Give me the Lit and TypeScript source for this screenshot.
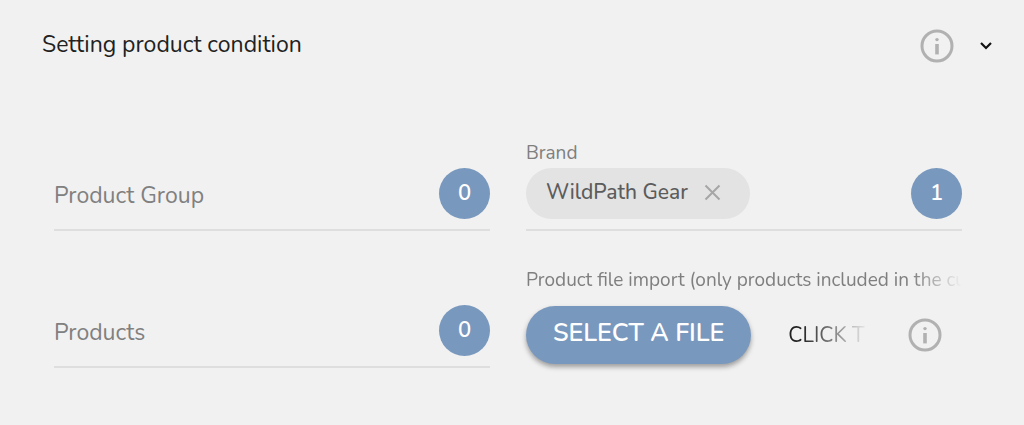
import { LitElement, html, css, svg } from "lit";
import { customElement, property } from "lit/decorators.js";

const infoIcon = html`<svg width="34" height="34" viewBox="0 0 34 34" aria-hidden="true">
  ${svg`<circle cx="17" cy="17" r="15" fill="none" stroke="#b1b1b1" stroke-width="3"/>
  <circle cx="17" cy="10.6" r="1.7" fill="#b1b1b1"/>
  <rect x="15.2" y="15" width="3.6" height="10.4" fill="#b1b1b1"/>`}
</svg>`;

@customElement("count-field")
export class CountField extends LitElement {
  @property() label = "";
  @property() chip = "";
  @property({ type: Number }) count = 0;

  static styles = css`
    :host { display: block; min-width: 0; }
    .caption { display: block; font-size: 19px; line-height: 24px; color: #7f7f7f; margin-bottom: 3px; }
    .row {
      display: flex;
      align-items: center;
      padding-bottom: 10px;
      border-bottom: 2px solid #dedede;
    }
    .label { padding-top: 4px; font-size: 23px; line-height: 32px; color: #808080; white-space: nowrap; }
    input {
      flex: 1;
      min-width: 0;
      height: 32px;
      border: 0;
      padding: 0;
      background: transparent;
      outline: none;
      font: inherit;
      font-size: 23px;
    }
    .chip {
      display: flex;
      align-items: center;
      height: 51px;
      box-sizing: border-box;
      padding: 0 29px 2px 20px;
      border-radius: 26px;
      background: #e3e3e3;
      color: #5c5c5c;
      font-size: 21px;
      font-weight: 500;
      line-height: 28px;
      white-space: nowrap;
    }
    .chip-text { padding-bottom: 2px; }
    .remove { display: flex; margin-left: 16px; border: 0; padding: 0; background: none; cursor: pointer; }
    .badge {
      flex: none;
      display: flex;
      align-items: center;
      justify-content: center;
      width: 51px;
      height: 51px;
      box-sizing: border-box;
      padding-bottom: 2px;
      border-radius: 50%;
      background: #7998be;
      color: #fff;
      font-size: 22px;
      font-weight: 600;
      line-height: 28px;
    }
  `;

  render() {
    return html`
      ${this.chip ? html`<label class="caption" for="value">${this.label}</label>` : ""}
      <div class="row">
        ${this.chip
          ? html`<span class="chip"><span class="chip-text">${this.chip}</span>
              <button class="remove" aria-label="Remove">
                <svg width="17" height="17" viewBox="0 0 17 17" aria-hidden="true">
                  <path d="M1.5 1.5 15.5 15.5M15.5 1.5 1.5 15.5" stroke="#a6a6a6" stroke-width="2" fill="none"/>
                </svg>
              </button></span>`
          : html`<label class="label" for="value">${this.label}</label>`}
        <input id="value" type="text" />
        <span class="badge">${this.count}</span>
      </div>
    `;
  }
}

@customElement("app-root")
export class AppRoot extends LitElement {
  static styles = css`
    :host {
      display: block;
      min-height: 100vh;
      background: #f1f1f1;
      color: #212121;
      font-family: Nunito, Lato, sans-serif;
    }
    .header { display: flex; align-items: center; padding: 29px 31px 0 42px; }
    .title { flex: 1; margin: 0; font-size: 23px; line-height: 32px; font-weight: 400; padding-bottom: 2px; }
    .icon-button { flex: none; display: flex; border: 0; padding: 0; background: none; cursor: pointer; }
    .header-actions { display: flex; align-items: center; gap: 25px; }
    .fields {
      display: grid;
      grid-template-columns: minmax(0, 1fr) minmax(0, 1fr);
      gap: 37px 36px;
      align-items: end;
      padding: 78px 62px 24px 54px;
    }
    .import { min-width: 0; }
    .caption {
      font-size: 19px;
      line-height: 24px;
      color: #7f7f7f;
      white-space: nowrap;
      overflow: hidden;
      mask-image: linear-gradient(to right, #000 calc(100% - 50px), transparent);
    }
    .controls { display: flex; align-items: center; padding: 14px 20px 4px 0; }
    .select {
      flex: none;
      height: 58px;
      padding: 0 27px 4px;
      border: 0;
      border-radius: 29px;
      background: #7998be;
      box-shadow: 0 3px 5px rgba(0, 0, 0, 0.35);
      color: #fff;
      font: inherit;
      font-size: 25px;
      font-weight: 600;
      line-height: 32px;
      cursor: pointer;
    }
    .clear {
      flex: 1;
      min-width: 0;
      margin: 0 32px 0 37px;
      padding: 0;
      border: 0;
      background: none;
      color: #212121;
      font: inherit;
      font-size: 21px;
      line-height: 32px;
      text-align: left;
      white-space: nowrap;
      overflow: hidden;
      mask-image: linear-gradient(to right, #000 15%, transparent 92%);
      cursor: pointer;
    }
  `;

  render() {
    return html`
      <header class="header">
        <h1 class="title">Setting product condition</h1>
        <div class="header-actions">
          <button class="icon-button" aria-label="Information">${infoIcon}</button>
          <button class="icon-button" aria-label="Collapse">
            <svg width="14" height="10" viewBox="0 0 14 10" aria-hidden="true">
              <path d="M2 2 7 7 12 2" fill="none" stroke="#111" stroke-width="2.2"/>
            </svg>
          </button>
        </div>
      </header>
      <main class="fields">
        <count-field label="Product Group" count="0"></count-field>
        <count-field label="Brand" chip="WildPath Gear" count="1"></count-field>
        <count-field label="Products" count="0"></count-field>
        <section class="import">
          <div class="caption">Product file import (only products included in the cur</div>
          <div class="controls">
            <button class="select">SELECT A FILE</button>
            <button class="clear">CLICK T</button>
            <button class="icon-button" aria-label="Information">${infoIcon}</button>
          </div>
        </section>
      </main>
    `;
  }
}
